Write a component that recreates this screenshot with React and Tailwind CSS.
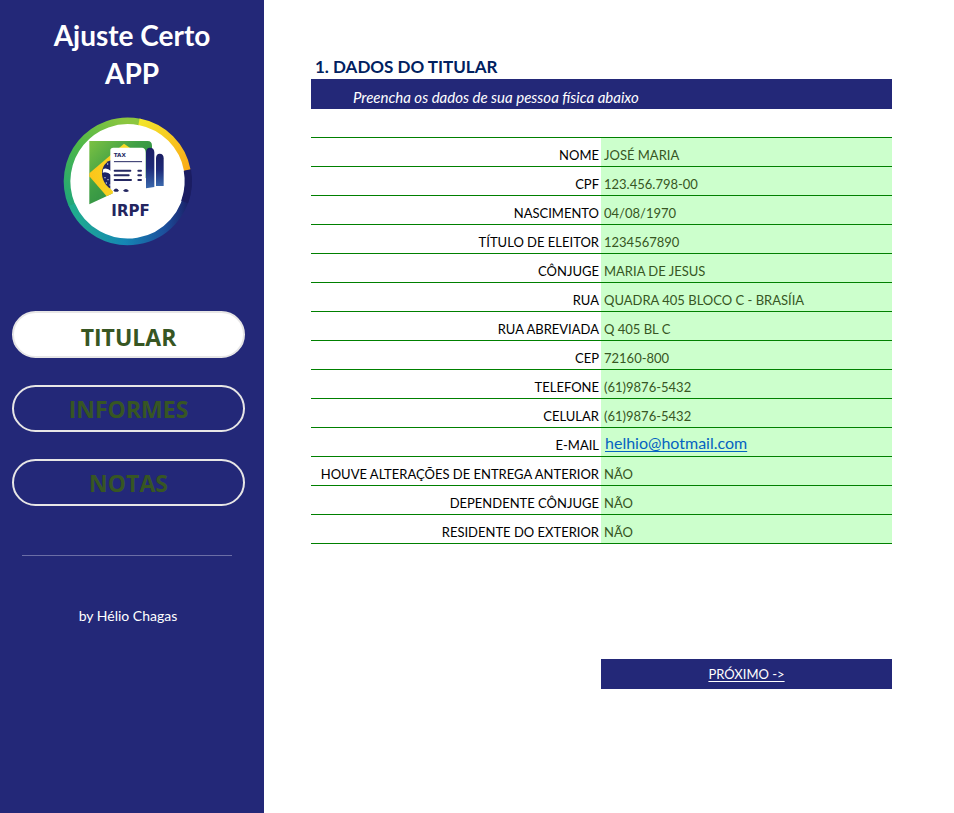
const fields = [
  { id: "nome", label: "NOME", value: "JOSÉ MARIA" },
  { id: "cpf", label: "CPF", value: "123.456.798-00" },
  { id: "nascimento", label: "NASCIMENTO", value: "04/08/1970" },
  { id: "titulo", label: "TÍTULO DE ELEITOR", value: "1234567890" },
  { id: "conjuge", label: "CÔNJUGE", value: "MARIA DE JESUS" },
  { id: "rua", label: "RUA", value: "QUADRA 405 BLOCO C - BRASÍIA" },
  { id: "rua-abreviada", label: "RUA ABREVIADA", value: "Q 405 BL C" },
  { id: "cep", label: "CEP", value: "72160-800" },
  { id: "telefone", label: "TELEFONE", value: "(61)9876-5432" },
  { id: "celular", label: "CELULAR", value: "(61)9876-5432" },
  { id: "email", label: "E-MAIL", value: "helhio@hotmail.com", link: true },
  { id: "alteracoes", label: "HOUVE ALTERAÇÕES DE ENTREGA ANTERIOR", value: "NÃO" },
  { id: "dependente", label: "DEPENDENTE CÔNJUGE", value: "NÃO" },
  { id: "exterior", label: "RESIDENTE DO EXTERIOR", value: "NÃO" },
];

function Logo() {
  return (
    <svg viewBox="0 0 435 420" className="h-[140px] w-[145px]" role="img" aria-label="IRPF">
      <defs>
        <linearGradient id="ringGreen" x1="0.8" y1="0" x2="0" y2="1">
          <stop offset="0" stopColor="#8cc63f" />
          <stop offset="0.5" stopColor="#4db748" />
          <stop offset="1" stopColor="#1fa67a" />
        </linearGradient>
        <linearGradient id="ringBlue" x1="0" y1="0" x2="1" y2="0">
          <stop offset="0" stopColor="#20ad8c" />
          <stop offset="0.45" stopColor="#1587b5" />
          <stop offset="0.8" stopColor="#1c4f9c" />
          <stop offset="1" stopColor="#1b2168" />
        </linearGradient>
        <linearGradient id="ringYellow" x1="0" y1="0" x2="1" y2="1">
          <stop offset="0" stopColor="#f2e62b" />
          <stop offset="1" stopColor="#fbab18" />
        </linearGradient>
        <linearGradient id="flagGreen" x1="0" y1="0" x2="1" y2="1">
          <stop offset="0" stopColor="#7cc242" />
          <stop offset="0.4" stopColor="#3f9f45" />
          <stop offset="1" stopColor="#1d7d45" />
        </linearGradient>
        <linearGradient id="diamond" x1="0" y1="0" x2="1" y2="0">
          <stop offset="0" stopColor="#fdc51a" />
          <stop offset="1" stopColor="#f3e72d" />
        </linearGradient>
        <linearGradient id="bar" x1="0" y1="0" x2="0" y2="1">
          <stop offset="0" stopColor="#1b1d62" />
          <stop offset="0.5" stopColor="#1e2a78" />
          <stop offset="1" stopColor="#3a69ad" />
        </linearGradient>
      </defs>
      <circle cx="218" cy="214" r="175" fill="#fff" />
      <g fill="none" strokeWidth="20">
        <path d="M400 224A182 182 0 0 1 50 283" stroke="url(#ringBlue)" />
        <path d="M50 284A182 182 0 0 1 254 36" stroke="url(#ringGreen)" />
        <path d="M252 35A182 182 0 0 1 397 181" stroke="url(#ringYellow)" />
        <path d="M397 180A182 182 0 0 1 389 276" stroke="#1b1d62" strokeWidth="22" />
      </g>
      <path d="M103 93H278Q291 93 291 108V195L103 283Z" fill="url(#flagGreen)" />
      <path d="M103 190L207 101L270 145V205L155 259L103 199Z" fill="url(#diamond)" />
      <path d="M168 151C145 158 138 181 142 201C147 222 161 237 180 242V151Z" fill="#1d2466" />
      <path d="M145 177Q156 172 169 184V196Q157 184 143 188Z" fill="#fff" />
      <g fill="#dce6f7">
        <circle cx="150" cy="203" r="2" />
        <circle cx="159" cy="209" r="2" />
        <circle cx="154" cy="219" r="2" />
        <circle cx="165" cy="225" r="2" />
        <circle cx="158" cy="162" r="2" />
      </g>
      <path d="M166 121Q166 113 175 113H262Q272 115 272 128V245H214L205 238L194 246L184 237L175 245L166 236Z" fill="#fff" />
      <text x="176" y="142" fontSize="17" fontWeight="700" fill="#252862" className="font-['DejaVu_Sans',sans-serif]">TAX</text>
      <g stroke="#252862" strokeLinecap="round" fill="none">
        <path d="M178 155H260" strokeWidth="3" />
        <path d="M179 182H226M250 182H258" strokeWidth="6" />
        <path d="M179 196H221M250 196H258" strokeWidth="6" />
        <path d="M179 210H228M250 210H258" strokeWidth="6" />
      </g>
      <path d="M174 244Q183 229 192 242Q203 251 213 239Q223 250 235 239L250 234H272V250L170 275Z" fill="#fff" />
      <path d="M175 242Q183 229 192 242Q184 249 175 242M204 242Q213 231 222 243Q213 250 204 242" fill="#252862" />
      <path d="M273 128Q273 113 285 113Q298 113 298 128V231L273 235Z" fill="url(#bar)" />
      <path d="M303 145Q303 131 314 131Q326 131 326 145V228H303Z" fill="url(#bar)" />
      <text x="169" y="319" fontSize="45" fontWeight="700" fill="#24255f" className="font-['DejaVu_Sans',sans-serif]">IRPF</text>
    </svg>
  );
}

function NavButton({ active, children }) {
  return (
    <button
      type="button"
      aria-current={active ? "page" : undefined}
      className={`h-[47px] w-full rounded-full border-2 border-[#e7e6e6] font-['Open_Sans',sans-serif] text-[23px] leading-8 font-bold text-[#375623] ${active ? "bg-white pt-1" : "bg-transparent pt-px"}`}
    >
      {children}
    </button>
  );
}

export default function App() {
  return (
    <div className="flex min-h-screen bg-white font-[Lato,sans-serif] text-[13px] text-black">
      <aside className="flex w-[264px] shrink-0 flex-col bg-[#232878] text-center text-white">
        <h1 className="mt-4 text-[28px] leading-[38px] font-bold">
          Ajuste Certo
          <br />
          APP
        </h1>
        <div className="mt-[18px] flex justify-center pr-[9px]">
          <Logo />
        </div>
        <nav className="mt-[61px] flex flex-col gap-[27px] pr-[19px] pl-3">
          <NavButton active>TITULAR</NavButton>
          <NavButton>INFORMES</NavButton>
          <NavButton>NOTAS</NavButton>
        </nav>
        <div className="mt-[49px] pr-8 pl-[22px]">
          <hr className="border-[#6b6ea6]" />
        </div>
        <p className="mt-[50px] pr-2 text-[14px] leading-5">by Hélio Chagas</p>
      </aside>

      <main className="min-w-0 flex-1 pt-[55px] pr-[62px] pb-8 pl-[47px]">
        <h2 className="pl-1 text-[17px] leading-6 font-bold text-[#002060]">1. DADOS DO TITULAR</h2>
        <p className="h-[30px] bg-[#232878] pt-2 pl-[42px] text-[15px] leading-5 text-white italic">
          Preencha os dados de sua pessoa física abaixo
        </p>
        <form className="mt-7 border-t border-[#008000]">
          {fields.map((f) => (
            <div key={f.id} className="grid h-[29px] grid-cols-[minmax(0,290fr)_minmax(0,291fr)] border-b border-[#008000]">
              {f.link ? (
                <span className="pt-[7px] pr-[2px] text-right leading-5">{f.label}</span>
              ) : (
                <label htmlFor={f.id} className="pt-[7px] pr-[2px] text-right leading-5 whitespace-nowrap">
                  {f.label}
                </label>
              )}
              {f.link ? (
                <div className="bg-[#ccffcc] pt-[3px] pl-1">
                  <a href="mailto:helhio@hotmail.com" className="text-[16px] leading-6 text-[#0563c1] underline underline-offset-2">
                    {f.value}
                  </a>
                </div>
              ) : (
                <input
                  id={f.id}
                  type="text"
                  defaultValue={f.value}
                  className="w-full min-w-0 bg-[#ccffcc] pt-[7px] pb-px pl-[3px] leading-5 text-[#375623] outline-none"
                />
              )}
            </div>
          ))}
        </form>
        <div className="mt-[115px] grid grid-cols-[minmax(0,290fr)_minmax(0,291fr)]">
          <a href="#informes" className="col-start-2 h-[30px] bg-[#232878] pt-[5px] text-center leading-5 text-white underline underline-offset-2">
            PRÓXIMO -&gt;
          </a>
        </div>
      </main>
    </div>
  );
}
